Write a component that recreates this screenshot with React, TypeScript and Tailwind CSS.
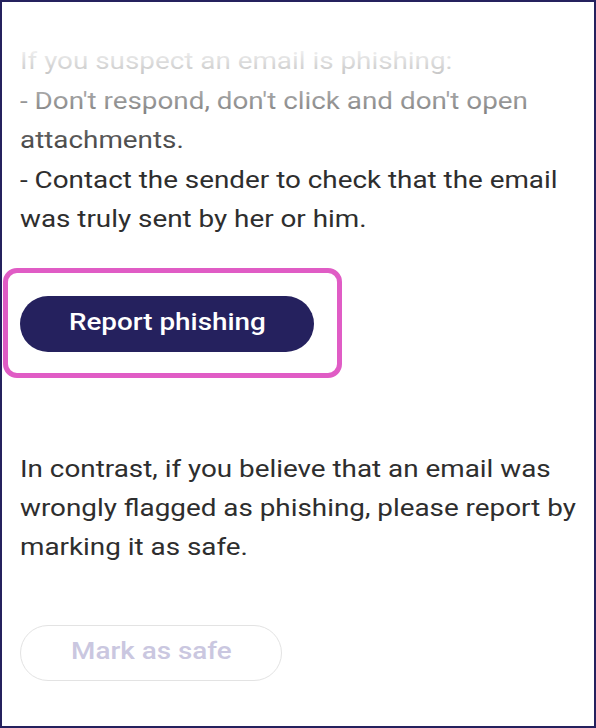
import React from "react";

export default function App() {
  return (
    <div className="w-[596px] h-[728px] bg-[#25215e] p-[2px] box-border" style={{ fontFamily: "Roboto, 'Noto Sans', sans-serif" }}>
      <div className="relative w-full h-full bg-white px-[18px] pt-[40px] box-border overflow-hidden">
        <p className="w-[463px] origin-left scale-x-[1.21] text-[23px] leading-[39.5px] text-[#2e2e2e]">
          If you suspect an email is phishing:
          <br />- Don't respond, don't click and don't open attachments.
          <br />- Contact the sender to check that the email was truly sent by her or him.
        </p>
        <div className="absolute left-0 right-0 top-0 h-[160px] bg-gradient-to-b from-white from-25% to-transparent pointer-events-none" />
        <div className="mt-[56px] flex">
          <div className="relative">
            <button className="w-[294px] h-[56px] rounded-full bg-[#25215e] text-white text-[23px] font-medium">
              <span className="inline-block scale-x-[1.21]">Report phishing</span>
            </button>
            <div className="absolute left-[-17px] top-[-28px] right-[-28px] bottom-[-26px] border-[5px] border-[#e05cc5] rounded-[14px] pointer-events-none" />
          </div>
        </div>
        <p className="mt-[98px] w-[463px] origin-left scale-x-[1.21] text-[23px] leading-[39px] text-[#2e2e2e]">
          In contrast, if you believe that an email was wrongly flagged as phishing, please report by marking it as safe.
        </p>
        <div className="mt-[58px] flex">
          <button className="w-[262px] h-[56px] rounded-full border border-[#e3e3e3] bg-white text-[#cac7e0] text-[23px] font-medium">
            <span className="inline-block scale-x-[1.21]">Mark as safe</span>
          </button>
        </div>
      </div>
    </div>
  );
}
